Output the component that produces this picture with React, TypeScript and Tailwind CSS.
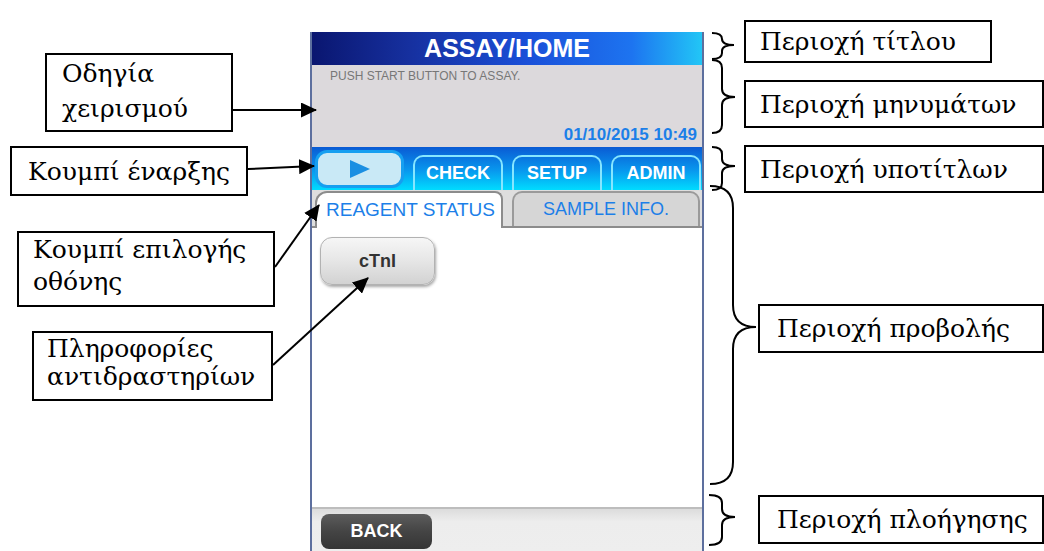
import { FC, PropsWithChildren } from "react";
import clsx from "clsx";

// labels around the device screen (diagram nodes, so placed on the canvas)
const Callout: FC<PropsWithChildren<{ className: string }>> = ({ className, children }) => {
  return (
    <div
      className={clsx(
        "absolute flex flex-col border-2 border-black bg-white font-['DejaVu_Serif','Liberation_Serif',serif] text-[25px] text-black",
        className
      )}
    >
      {children}
    </div>
  );
};

const brace = (x0: number, y0: number, y1: number, xv: number, xt: number, ym: number, r: number) =>
  `M${x0} ${y0} Q${xv} ${y0} ${xv} ${y0 + r} L${xv} ${ym - r} Q${xv} ${ym} ${xt} ${ym} Q${xv} ${ym} ${xv} ${ym + r} L${xv} ${y1 - r} Q${xv} ${y1} ${x0} ${y1}`;

const braces = [
  brace(712, 33, 59, 722, 734, 45, 6),
  brace(712, 60, 133, 722, 735, 97, 8),
  brace(712, 147, 190, 722, 735, 166, 7),
  brace(710, 186, 484, 733, 756, 327, 22),
  brace(709, 495, 545, 722, 735, 517, 8),
];

const arrows = [
  { x1: 233, y1: 110, x2: 316, y2: 110 },
  { x1: 248, y1: 169, x2: 314, y2: 166 },
  { x1: 275, y1: 267, x2: 319, y2: 205 },
  { x1: 273, y1: 365, x2: 368, y2: 278 },
];

const Overlay = () => {
  return (
    <svg className="pointer-events-none absolute inset-0 z-10" width={1044} height={551} viewBox="0 0 1044 551">
      <defs>
        <marker id="head" markerUnits="userSpaceOnUse" markerWidth="16" markerHeight="15" refX="15" refY="7.5" orient="auto">
          <path d="M0 0 L16 7.5 L0 15 Z" fill="#000" />
        </marker>
      </defs>
      {arrows.map((a, i) => (
        <line key={i} {...a} stroke="#000" strokeWidth={2} markerEnd="url(#head)" />
      ))}
      {braces.map((d, i) => (
        <path key={i} d={d} fill="none" stroke="#000" strokeWidth={2} />
      ))}
    </svg>
  );
};

const tabs = ["CHECK", "SETUP", "ADMIN"];

const Screen = () => {
  return (
    <div className="absolute left-[310px] top-[32px] flex h-[519px] w-[394px] flex-col border-x-2 border-[#5d6f9e] font-['Liberation_Sans',Arial,sans-serif]">
      <div className="flex h-[33px] items-center justify-center bg-[linear-gradient(to_right,#0a1670,#16309f_25%,#1a4fd8_55%,#1d74f0_82%,#22c6f6)] text-[25px] font-bold leading-none text-white">
        ASSAY/HOME
      </div>
      <div className="flex h-[82px] flex-col justify-between bg-[#dcd9dc] pb-[2px] pl-[18px] pr-[5px] pt-[4px]">
        <span className="text-[12px] leading-[14px] text-[#777]">PUSH START BUTTON TO ASSAY.</span>
        <span className="self-end text-[17px] font-bold leading-[20px] text-[#1c7fe8]">01/10/2015 10:49</span>
      </div>
      <div className="flex h-[43px] items-end gap-[9px] bg-[linear-gradient(to_bottom,#0a5bd4,#0898ee_55%,#00dcff)] pl-[3px]">
        <div className="mb-[2px] flex h-[38px] w-[89px] items-center justify-center rounded-[12px] border-[3px] border-[#169ff0] bg-[#c9e9f6]">
          <svg width="22" height="20" viewBox="0 0 22 20">
            <path d="M1 1 L21 10 L1 19 Z" fill="#1a8fe2" />
          </svg>
        </div>
        {tabs.map((t) => (
          <div
            key={t}
            className="flex h-[35px] w-[90px] items-center justify-center rounded-t-[10px] border-2 border-b-0 border-[#86e6ff] text-[18px] font-bold text-white"
          >
            {t}
          </div>
        ))}
      </div>
      <div className="flex h-[38px] items-end gap-[9px] border-b-2 border-[#8c8c8c] bg-[#dedede] pl-[3px]">
        <div className="-mb-[2px] flex h-[37px] w-[188px] items-center rounded-tl-[12px] rounded-tr-[8px] border-2 border-b-0 border-[#8c8c8c] bg-white pl-[9px] text-[19px] text-[#1c7fe8]">
          REAGENT STATUS
        </div>
        <div className="flex h-[35px] w-[188px] items-center justify-center rounded-t-[10px] border-2 border-b-0 border-[#9a9a9a] bg-[#d6d6d6] text-[18px] text-[#1c7fe8]">
          SAMPLE INFO.
        </div>
      </div>
      <div className="flex-1 bg-white pl-[8px] pt-[9px]">
        <div className="flex h-[48px] w-[115px] items-center justify-center rounded-[12px] border border-[#b2b2b2] bg-[linear-gradient(to_bottom,#f6f6f6,#e6e6e6_50%,#d2d2d2)] text-[18px] font-bold text-[#333] shadow-[1px_2px_3px_rgba(0,0,0,0.35)]">
          cTnI
        </div>
      </div>
      <div className="h-[44px] border-t-2 border-[#bdbdbd] bg-[linear-gradient(to_bottom,#dcdcdc,#ededed_30%,#eeeeee)] pl-[9px] pt-[5px]">
        <div className="flex h-[35px] w-[111px] items-center justify-center rounded-[8px] bg-[linear-gradient(to_bottom,#5c5c5c,#444_50%,#353535)] text-[18px] font-bold text-white">
          BACK
        </div>
      </div>
    </div>
  );
};

const App = () => {
  return (
    <div className="relative h-[551px] w-[1044px] overflow-hidden bg-white">
      <Screen />

      <Callout className="left-[45px] top-[53px] h-[79px] w-[188px] pl-[15px] pt-[1px] leading-[35px]">
        <span>Οδηγία</span>
        <span>χειρισμού</span>
      </Callout>
      <Callout className="left-[10px] top-[146px] h-[50px] w-[238px] items-center justify-center leading-none">
        Κουμπί έναρξης
      </Callout>
      <Callout className="left-[17px] top-[231px] h-[76px] w-[258px] pl-[14px] pt-[1px] leading-[32px]">
        <span>Κουμπί επιλογής</span>
        <span>οθόνης</span>
      </Callout>
      <Callout className="left-[32px] top-[331px] h-[70px] w-[241px] pl-[13px] pt-[2px] leading-[28px]">
        <span>Πληροφορίες</span>
        <span>αντιδραστηρίων</span>
      </Callout>

      <Callout className="left-[744px] top-[20px] h-[43px] w-[248px] justify-center pl-[14px] leading-none">
        Περιοχή τίτλου
      </Callout>
      <Callout className="left-[744px] top-[80px] h-[48px] w-[300px] justify-center pl-[14px] leading-none">
        Περιοχή μηνυμάτων
      </Callout>
      <Callout className="left-[744px] top-[145px] h-[48px] w-[300px] justify-center pl-[14px] leading-none">
        Περιοχή υποτίτλων
      </Callout>
      <Callout className="left-[758px] top-[304px] h-[49px] w-[286px] justify-center pl-[17px] leading-none">
        Περιοχή προβολής
      </Callout>
      <Callout className="left-[758px] top-[495px] h-[49px] w-[286px] justify-center pl-[17px] leading-none">
        Περιοχή πλοήγησης
      </Callout>

      <Overlay />
    </div>
  );
};

export default App;
